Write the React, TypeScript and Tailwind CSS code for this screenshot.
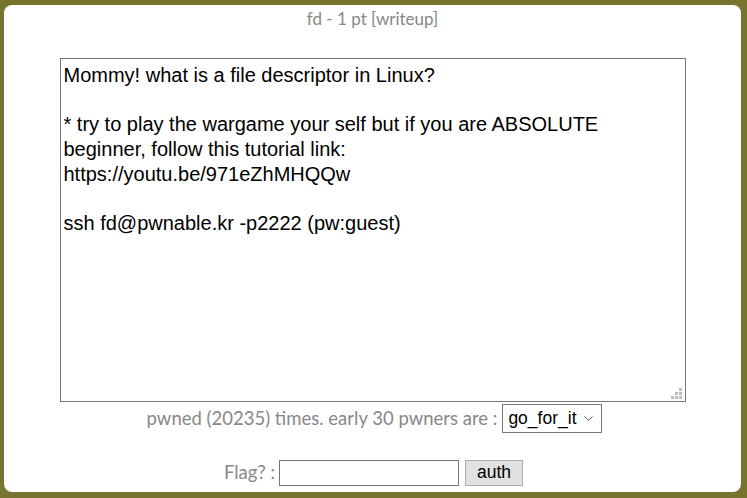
import React from 'react';

const desc = `Mommy! what is a file descriptor in Linux?

* try to play the wargame your self but if you are ABSOLUTE beginner, follow this tutorial link:
https://youtu.be/971eZhMHQQw

ssh fd@pwnable.kr -p2222 (pw:guest)`;

// grip dots in the bottom-right corner of the textarea
const grip = [
  [0, 0, 1],
  [0, 1, 1],
  [1, 1, 1],
];

const App: React.FC = () => {
  return (
    <div className="h-[498px] w-[747px] bg-[#77742f] pt-[5px] pl-[4px] pr-[6px] pb-[6px]">
      <div className="flex h-full flex-col items-center rounded-[8px] bg-white font-['Lato',sans-serif] text-[#888888]">
        {/* Title */}
        <div className="mt-[3px] h-[22px] text-[17px] leading-[22px]">fd - 1 pt [writeup]</div>

        {/* Challenge text */}
        <div className="relative mt-[28px] h-[344px] w-[626px]">
          <textarea
            readOnly
            defaultValue={desc}
            className="block h-full w-full resize-none border border-[#767676] px-[3px] pt-[4px] font-['Liberation_Sans',Arial,sans-serif] text-[20px] leading-[24.7px] text-black outline-none"
          />
          <div className="absolute bottom-[3px] right-[4px] flex flex-col gap-[1px]">
            {grip.map((row, i) => (
              <div key={i} className="flex gap-[1px]">
                {row.map((on, j) => (
                  <span key={j} className={on ? 'h-[3px] w-[3px] bg-[#bdbdbd]' : 'h-[3px] w-[3px]'} />
                ))}
              </div>
            ))}
          </div>
        </div>

        {/* Pwners */}
        <div className="mt-[2px] flex items-center gap-[5px] pl-[4px] text-[18.5px]">
          <span>pwned (20235) times. early 30 pwners are :</span>
          <div className="relative">
            <select className="block h-[29px] w-[100px] appearance-none border border-[#767676] bg-white pl-[5px] font-['Liberation_Sans',Arial,sans-serif] text-[17.5px] text-black outline-none">
              <option>go_for_it</option>
            </select>
            <svg className="pointer-events-none absolute right-[9px] top-[12px]" width="9" height="5" viewBox="0 0 9 5">
              <path d="M0.5 0.5 L4.5 4.5 L8.5 0.5" fill="none" stroke="#555" strokeWidth="1" />
            </svg>
          </div>
        </div>

        {/* Flag */}
        <div className="mt-[26px] flex items-center pl-[2px] text-[18.5px]">
          <span className="mr-[4px]">Flag? :</span>
          <input className="h-[26px] w-[180px] border border-[#767676] px-1 text-black outline-none" />
          <button className="ml-[6px] h-[26px] w-[58px] border border-[#adadad] bg-[#e1e1e1] font-['Liberation_Sans',Arial,sans-serif] text-[17.5px] leading-none text-black">
            auth
          </button>
        </div>
      </div>
    </div>
  );
};

export default App;
